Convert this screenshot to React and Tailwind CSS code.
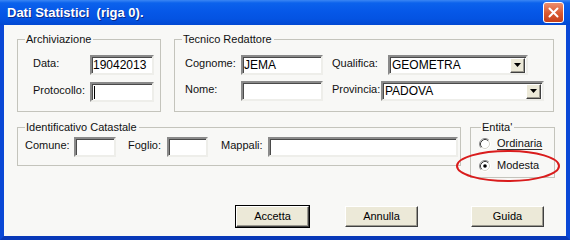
const font = { fontFamily: '"Liberation Sans", Arial, sans-serif' };

function GroupBox({ title, lead = "w-[8px]", className = "", bodyClass = "", children }) {
  return (
    <div className={`flex flex-col ${className}`}>
      <div className="flex h-[13px] items-end">
        <div className={`h-[7px] shrink-0 border-l border-t border-[#c4c4bc] ${lead}`} />
        <span className="self-start pl-[1px] pr-[2px] text-[11px] leading-[13px] text-[#111]">{title}</span>
        <div className="h-[7px] flex-1 border-r border-t border-[#c4c4bc]" />
      </div>
      <div className={`border-x border-b border-[#c4c4bc] ${bodyClass}`}>{children}</div>
    </div>
  );
}

function Label({ w, className = "", children }) {
  return (
    <span className={`mt-[2px] shrink-0 text-[11px] leading-[13px] text-[#111] ${w} ${className}`}>{children}</span>
  );
}

function TextBox({ w, h = "h-[20px]", value, caret }) {
  return (
    <div
      className={`flex shrink-0 items-center border-2 border-b-[#eeeeea] border-l-[#8a8a8a] border-r-[#eeeeea] border-t-[#8a8a8a] bg-white pl-[1px] text-[12px] leading-[14px] text-black shadow-[inset_1px_1px_0_#4a4a4a] ${w} ${h}`}
    >
      {caret ? <span className="ml-[1px] h-[13px] w-[1px] bg-black" /> : null}
      {value}
    </div>
  );
}

function Combo({ w, value }) {
  return (
    <div
      className={`flex h-[20px] shrink-0 items-center justify-between border-2 border-b-[#eeeeea] border-l-[#8a8a8a] border-r-[#eeeeea] border-t-[#8a8a8a] bg-white pl-[1px] text-[12px] leading-[14px] text-black shadow-[inset_1px_1px_0_#4a4a4a] ${w}`}
    >
      <span className="ml-[1px]">{value}</span>
      <div className="mr-[1px] flex h-[15px] w-[15px] items-center justify-center border border-b-[#404040] border-l-[#ffffff] border-r-[#404040] border-t-[#ffffff] bg-[#ece9d8] shadow-[inset_-1px_-1px_0_#9c9a90]">
        <svg width="7" height="4" viewBox="0 0 7 4">
          <path d="M0 0h7L3.5 4z" fill="#000" />
        </svg>
      </div>
    </div>
  );
}

function Radio({ checked, label, underline }) {
  return (
    <div className="flex h-[13px] items-center gap-[6px]">
      <svg width="12" height="12" viewBox="0 0 12 12" className="shrink-0">
        <circle cx="6" cy="6" r="5" fill="#fff" />
        <path d="M2.11 9.89A5.5 5.5 0 0 1 9.89 2.11" fill="none" stroke="#8a8a8a" />
        <path d="M9.89 2.11A5.5 5.5 0 0 1 2.11 9.89" fill="none" stroke="#fff" />
        <path d="M2.82 9.18A4.5 4.5 0 0 1 9.18 2.82" fill="none" stroke="#404040" />
        <path d="M9.18 2.82A4.5 4.5 0 0 1 2.82 9.18" fill="none" stroke="#d8d6cc" />
        {checked ? <circle cx="6" cy="6" r="1.8" fill="#000" /> : null}
      </svg>
      <span className={`text-[11px] leading-[13px] text-[#111] ${underline ? "underline decoration-[#333] underline-offset-[2px]" : ""}`}>
        {label}
      </span>
    </div>
  );
}

function Button({ label, isDefault, className = "" }) {
  return (
    <div className={`${isDefault ? "border border-black" : "border border-transparent"} ${className}`}>
      <div className="flex h-[21px] w-[73px] items-center justify-center border border-b-[#404040] border-l-[#ffffff] border-r-[#404040] border-t-[#ffffff] bg-[#ece9d8] text-[11px] text-black shadow-[inset_-1px_-1px_0_#9c9a90]">
        {label}
      </div>
    </div>
  );
}

export default function App() {
  return (
    <div className="relative h-[240px] w-[570px] overflow-hidden" style={font}>
      {/* title bar */}
      <div className="flex h-[25px] items-center justify-between bg-[linear-gradient(to_bottom,#3a86f4_0%,#0b62ec_12%,#0658e8_45%,#0453e2_75%,#0249d2_100%)] pl-[7px] pr-[6px]">
        <span className="whitespace-pre text-[13px] font-bold text-white [text-shadow:1px_1px_0_#0a2a8a]">
          {"Dati Statistici  (riga 0)."}
        </span>
        <div className="flex h-[21px] w-[21px] items-center justify-center rounded-[3px] border border-white bg-[linear-gradient(to_bottom,#eb8e6e,#d8582f_55%,#c5401b)]">
          <svg width="11" height="11" viewBox="0 0 11 11">
            <path d="M1.5 1.5l8 8M9.5 1.5l-8 8" stroke="#fff" strokeWidth="2" strokeLinecap="round" />
          </svg>
        </div>
      </div>

      {/* client area */}
      <div className="h-[215px] border-x-4 border-b-4 border-x-[#0a48d6] border-b-[#0838b8]">
        <div className="flex h-full flex-col bg-[#f8f8f6] pl-[13px] pt-[8px]">
          <div className="flex gap-[13px]">
            <GroupBox title="Archiviazione" className="w-[144px]" bodyClass="h-[66px] pl-[15px] pt-[9px]">
              <div className="flex items-start">
                <Label w="w-[57px]">Data:</Label>
                <TextBox w="w-[64px]" value="19042013" />
              </div>
              <div className="mt-[7px] flex items-start">
                <Label w="w-[57px]">Protocollo:</Label>
                <TextBox w="w-[64px]" caret />
              </div>
            </GroupBox>

            <GroupBox title="Tecnico Redattore" className="w-[380px]" bodyClass="h-[66px] pl-[10px] pt-[9px]">
              <div className="flex items-start">
                <Label w="w-[56px]">Cognome:</Label>
                <TextBox w="w-[82px]" value="JEMA" />
                <Label w="w-[56px]" className="ml-[9px]">Qualifica:</Label>
                <Combo w="w-[140px]" value="GEOMETRA" />
              </div>
              <div className="mt-[6px] flex items-start">
                <Label w="w-[56px]">Nome:</Label>
                <TextBox w="w-[82px]" />
                <Label w="w-[49px]" className="ml-[9px]">Provincia:</Label>
                <Combo w="w-[163px]" value="PADOVA" />
              </div>
            </GroupBox>
          </div>

          <div className="mt-[9px] flex items-start gap-[9px]">
            <GroupBox title="Identificativo Catastale" className="w-[444px]" bodyClass="h-[32px] pl-[7px] pt-[3px]">
              <div className="flex items-start">
                <Label w="w-[49px]">Comune:</Label>
                <TextBox w="w-[42px]" />
                <Label w="w-[39px]" className="ml-[12px]">Foglio:</Label>
                <TextBox w="w-[41px]" />
                <Label w="w-[47px]" className="ml-[13px]">Mappali:</Label>
                <TextBox w="w-[190px]" />
              </div>
            </GroupBox>

            <GroupBox title="Entita'" lead="w-[11px]" className="w-[85px]" bodyClass="h-[44px] pl-[8px] pt-[3px]">
              <Radio label="Ordinaria" underline />
              <div className="mt-[9px]">
                <Radio label="Modesta" checked />
              </div>
            </GroupBox>
          </div>

          <div className="mt-[27px] flex">
            <Button label="Accetta" isDefault className="ml-[218px]" />
            <Button label="Annulla" className="ml-[34px]" />
            <Button label="Guida" className="ml-[51px]" />
          </div>
        </div>
      </div>

      {/* red annotation ellipse */}
      <svg className="pointer-events-none absolute left-0 top-0" width="570" height="240" viewBox="0 0 570 240">
        <ellipse cx="508" cy="166" rx="51" ry="15" fill="none" stroke="#d91c1c" strokeWidth="2" />
      </svg>
    </div>
  );
}
